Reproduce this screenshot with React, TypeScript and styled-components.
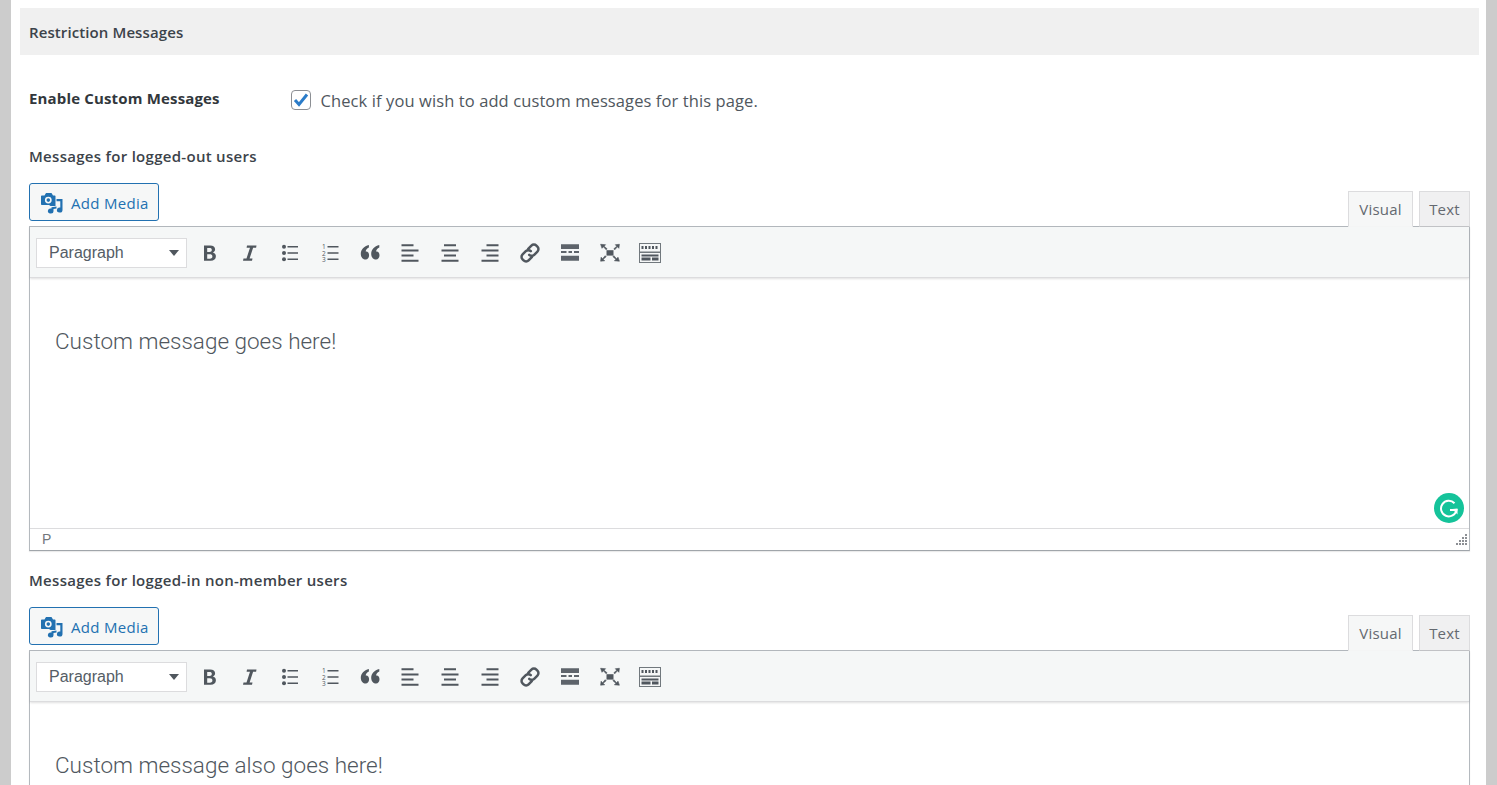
import React from "react";
import styled, { createGlobalStyle } from "styled-components";

const Global = createGlobalStyle`
  html, body { margin: 0; padding: 0; height: 100%; overflow: hidden; background: #ccc; }
  #root { height: 785px; overflow: hidden; }
`;

const Page = styled.div`
  box-sizing: border-box;
  height: 785px;
  margin: 0 11px;
  padding: 8px 7px 0 9px;
  background: #fff;
  overflow: hidden;
  font-family: "Open Sans", "Noto Sans", sans-serif;
  color: #3c434a;
`;

const SectionHeader = styled.h2`
  box-sizing: border-box;
  height: 47px;
  margin: 0;
  padding: 0 9px;
  background: #f0f0f0;
  font-size: 15px;
  font-weight: 600;
  letter-spacing: 0.1px;
  line-height: 49px;
  color: #3c434a;
`;

const Body = styled.div`
  padding: 0 9px;
`;

const OptionRow = styled.div`
  display: flex;
  align-items: flex-start;
  height: 92px;
  padding-top: 34px;
  box-sizing: border-box;
`;

const OptionLabel = styled.div`
  width: 262px;
  font-size: 15px;
  font-weight: 700;
  letter-spacing: 0.16px;
  line-height: 19px;
  color: #32373c;
`;

const CheckBox = styled.span`
  box-sizing: border-box;
  width: 20px;
  height: 20px;
  margin: 1px 9.5px 0 0;
  border: 1px solid #8c8f94;
  border-radius: 4px;
  background: #fff;
  display: flex;
  align-items: center;
  justify-content: center;
`;

const CheckText = styled.span`
  margin-top: 1px;
  font-size: 16.5px;
  letter-spacing: 0.1px;
  line-height: 22px;
  color: #50575e;
`;

const EditorLabel = styled.div`
  font-size: 15px;
  font-weight: 600;
  letter-spacing: 0.29px;
  line-height: 18px;
  color: #3c434a;
`;

const EditorHead = styled.div`
  display: flex;
  justify-content: space-between;
  align-items: flex-end;
  height: 43px;
  margin-top: 18px;
`;

const MediaButton = styled.button`
  box-sizing: border-box;
  width: 130px;
  height: 38px;
  margin-bottom: 5px;
  padding: 2px 0 0 10px;
  display: flex;
  align-items: center;
  gap: 7px;
  border: 1px solid #2271b1;
  border-radius: 3px;
  background: #f6f7f7;
  color: #2271b1;
  font: 400 15px/1 "Open Sans", sans-serif;
  letter-spacing: 0.3px;
`;

const Tabs = styled.div`
  display: flex;
  gap: 6px;
  align-items: flex-end;
  position: relative;
  top: 1px;
`;

const Tab = styled.div<{ $active?: boolean; $width: number }>`
  box-sizing: border-box;
  width: ${(p) => p.$width}px;
  height: 36px;
  text-align: center;
  border: 1px solid #dcdcde;
  border-bottom-color: ${(p) => (p.$active ? "#f6f7f7" : "#c3c4c7")};
  background: ${(p) => (p.$active ? "#f6f7f7" : "#f0f0f1")};
  font-size: 15px;
  letter-spacing: 0.2px;
  line-height: 34px;
  color: #646970;
`;

const Editor = styled.div`
  box-sizing: border-box;
  border: 1px solid #b4b9be;
  border-bottom-color: #a0a5aa;
  box-shadow: 0 1px 1px rgba(0, 0, 0, 0.08);
  background: #fff;
  margin-bottom: 20px;
`;

const Toolbar = styled.div`
  box-sizing: border-box;
  height: 51px;
  padding: 1px 0 0 6px;
  display: flex;
  align-items: center;
  background: #f5f7f7;
  border-bottom: 1px solid #dcdcde;
  box-shadow: 0 1px 2px rgba(0, 0, 0, 0.12);
  position: relative;
`;

const FormatSelect = styled.div`
  box-sizing: border-box;
  width: 151px;
  height: 30px;
  margin-right: 3px;
  padding: 0 7px 0 12px;
  display: flex;
  align-items: center;
  justify-content: space-between;
  background: #fff;
  border: 1px solid #dcdcde;
  font: 400 16px/1 "Liberation Sans", Arial, sans-serif;
  color: #555d66;
`;

const Caret = styled.span`
  width: 0;
  height: 0;
  border-left: 5px solid transparent;
  border-right: 5px solid transparent;
  border-top: 6px solid #50575e;
`;

const ToolButton = styled.span`
  width: 40px;
  height: 30px;
  display: flex;
  align-items: center;
  justify-content: center;
  color: #50575e;
`;

const Content = styled.div`
  box-sizing: border-box;
  height: 250px;
  padding: 48px 25px 0;
  position: relative;
  font: 300 22.5px/30px Roboto, sans-serif;
  color: #50575e;
`;

const Grammarly = styled.span`
  position: absolute;
  right: 5px;
  bottom: 5px;
  width: 30px;
  height: 30px;
`;

const StatusBar = styled.div`
  box-sizing: border-box;
  height: 22px;
  padding: 0 0 1px 12px;
  border-top: 1px solid #dcdcde;
  display: flex;
  align-items: center;
  justify-content: space-between;
  font: 400 14px/1 "Liberation Sans", Arial, sans-serif;
  color: #72777c;
`;

const Svg = ({ children }: { children: React.ReactNode }) => (
  <svg width="20" height="20" viewBox="0 0 20 20" fill="currentColor">{children}</svg>
);

const Bold = () => (
  <Svg>
    <path fillRule="evenodd" d="M4 2.500h6.200c3.100 0 4.900 1.300 4.900 3.800 0 1.600-.9 2.900-2.300 3.300 1.900.3 3.100 1.700 3.100 3.600 0 2.800-2 4.500-5.200 4.500H4zM7.200 5v3.900h2.300c1.500 0 2.300-.7 2.300-2S11 5 9.500 5zM7.200 11.300v4.400h2.700c1.600 0 2.500-.8 2.500-2.200s-.9-2.200-2.500-2.200z" />
  </Svg>
);
const Italic = () => (
  <Svg>
    <path d="M7 2.500h9.500l-.4 2.200h-3L9.600 15.500h2.900l-.5 2.300H3l.5-2.300h3L10 4.700H6.600z" />
  </Svg>
);
const BulletList = () => (
  <Svg>
    <circle cx="4" cy="3.800" r="2" /><circle cx="4" cy="10" r="2" /><circle cx="4" cy="16.300" r="2" />
    <path d="M7.500 3h10.500v1.500H7.500zM7.500 9.300h10.500v1.500H7.500zM7.500 15.500h10.500v1.500H7.500z" />
  </Svg>
);
const NumList = () => (
  <Svg>
    <text x="2" y="6" fontSize="6.500" fontFamily="Open Sans, sans-serif">1</text>
    <text x="2" y="12.500" fontSize="6.500" fontFamily="Open Sans, sans-serif">2</text>
    <text x="2" y="19" fontSize="6.500" fontFamily="Open Sans, sans-serif">3</text>
    <path d="M7.500 3h11v1.500h-11zM7.500 9.300h11v1.500h-11zM7.500 15.500h11v1.500h-11z" />
  </Svg>
);
const Quote = () => (
  <Svg>
    <g transform="translate(0,-2.500) scale(1,1.250)">
      <path d="M8.900 3.500v2.100c-2 .8-3 1.800-3.200 3.200 1.900-.3 3.400 1 3.400 3 0 2.100-1.500 3.400-3.400 3.400C3.200 15.200.8 13.700.8 10.600c0-3.600 3.200-6 8.100-7.100zM19.300 3.500v2.100c-2 .8-3 1.800-3.200 3.200 1.900-.3 3.400 1 3.400 3 0 2.100-1.500 3.400-3.400 3.400-2.500 0-4.900-1.500-4.900-4.600 0-3.600 3.200-6 8.100-7.100z" />
    </g>
  </Svg>
);
const Align = ({ kind }: { kind: "l" | "c" | "r" }) => {
  const short = kind === "l" ? 1.500 : kind === "c" ? 4 : 6.500;
  return (
    <Svg>
      <path d={`M${short} 1.200h12v2h-12zM1.500 6.400h17v2h-17zM${short} 11.600h12v2h-12zM1.500 16.800h17v2h-17z`} />
    </Svg>
  );
};
const LinkIcon = () => (
  <svg width="22" height="22" viewBox="0 0 22 22" fill="none" stroke="currentColor" strokeWidth="2.500" strokeLinecap="round">
    <path d="M9.200 6.800l3.200-3.200a3.500 3.500 0 0 1 5 0l1 1a3.500 3.500 0 0 1 0 5l-3.200 3.200a3.500 3.500 0 0 1-5 0" />
    <path d="M12.800 15.200l-3.200 3.200a3.500 3.500 0 0 1-5 0l-1-1a3.500 3.500 0 0 1 0-5l3.200-3.200a3.500 3.500 0 0 1 5 0" />
  </svg>
);
const Rule = () => (
  <Svg>
    <path d="M1 1.200h18v4.800H1zM1 7.900h5.500v2H1zM8.500 7.900h3.500v2H8.500zM14 7.900h5v2h-5zM1 12.800h18v5H1z" opacity=".92" />
  </Svg>
);
const Fullscreen = () => (
  <Svg>
    <path d="M6.500 7.200h7v5.400h-7z" />
    <path stroke="currentColor" strokeWidth=".6" d="M.6 1.300l5 .4-1.500 1.500 3 2.600-1 1-2.600-3L2 5.300zM19.400 1.300l-.5 4-1.500-1.500-2.600 3-1-1 3-2.600-1.500-1.500zM.6 18.200l.5-4 1.500 1.500 2.600-3 1 1-3 2.600 1.500 1.500zM19.400 18.200l-5-.4 1.500-1.500-3-2.600 1-1 2.600 3 1.500-1.500z" />
  </Svg>
);
const Kitchen = () => (
  <svg width="24" height="20" viewBox="0 0 24 20" fill="currentColor">
    <path fillRule="evenodd" d="M1 0h22v20H1zM2 1v7.500h20V1zM2 10v9h20v-9z" opacity=".8" />
    <path d="M3.500 3h2v3h-2zM7 3h2v3H7zM10.500 3h2v3h-2zM14 3h2v3h-2zM17.500 3h2v3h-2zM3.500 11.500h17v2h-17zM3.500 14.500h9v3h-9zM14 14.500h6.500v3H14z" />
  </svg>
);

const MediaIcon = () => (
  <svg width="24" height="24" viewBox="0 0 24 24" fill="#2271b1">
    <path fillRule="evenodd" d="M1.800 4.500H4.500L6 2h5.500L13 4.500h1.700c.5 0 .8.300.8.800V15h-5l-1.500-1H1.800c-.5 0-.8-.3-.8-.8V5.300c0-.5.300-.8.800-.8zM8.300 5.700a3.400 3.400 0 1 0 0 6.800 3.400 3.400 0 0 0 0-6.800z" />
    <circle cx="8.300" cy="9.100" r="1.800" />
    <path d="M16.500 8h6v11a2.800 2.500 0 1 1-2.200-2.400v-6.300h-3.800zM11.500 16.200l5-.8v2.200l-3 .5V20a2.800 2.500 0 1 1-2-2.400z" />
  </svg>
);

const CheckMark = () => (
  <svg width="16" height="14" viewBox="0 0 16 14" fill="none" stroke="#2b7cc9" strokeWidth="3">
    <path d="M2 7l4 4.500 8-10" />
  </svg>
);

const GrammarlyIcon = () => (
  <svg width="30" height="30" viewBox="0 0 30 30">
    <circle cx="15" cy="15" r="15" fill="#15c39a" />
    <path d="M20.500 10.200A7.800 7.800 0 1 0 22.500 17H16" fill="none" stroke="#fff" strokeWidth="2" />
    <path d="M23.500 15.500v6l-5-5.500z" fill="#fff" />
  </svg>
);

const Grip = () => (
  <svg width="14" height="14" viewBox="0 0 14 14" fill="#8c8f94">
    {[[10, 2], [10, 5], [7, 5], [10, 8], [7, 8], [4, 8], [10, 11], [7, 11], [4, 11], [1, 11]].map(([x, y]) => (
      <rect key={`${x}-${y}`} x={x} y={y} width="2" height="2" />
    ))}
  </svg>
);

const tools = [
  <Bold />, <Italic />, <BulletList />, <NumList />, <Quote />,
  <Align kind="l" />, <Align kind="c" />, <Align kind="r" />,
  <LinkIcon />, <Rule />, <Fullscreen />, <Kitchen />,
];

const EditorBlock = ({ label, text, first }: { label: string; text: string; first?: boolean }) => (
  <>
    <EditorLabel>{label}</EditorLabel>
    <EditorHead>
      <MediaButton><MediaIcon />Add Media</MediaButton>
      <Tabs>
        <Tab $active $width={65}>Visual</Tab>
        <Tab $width={51}>Text</Tab>
      </Tabs>
    </EditorHead>
    <Editor>
      <Toolbar>
        <FormatSelect>Paragraph<Caret /></FormatSelect>
        {tools.map((t, i) => <ToolButton key={i}>{t}</ToolButton>)}
      </Toolbar>
      <Content>
        {text}
        {first && <Grammarly><GrammarlyIcon /></Grammarly>}
      </Content>
      {first && <StatusBar>P<Grip /></StatusBar>}
    </Editor>
  </>
);

export default function App() {
  return (
    <>
      <Global />
      <Page>
        <SectionHeader>Restriction Messages</SectionHeader>
        <Body>
          <OptionRow>
            <OptionLabel>Enable Custom Messages</OptionLabel>
            <CheckBox><CheckMark /></CheckBox>
            <CheckText>Check if you wish to add custom messages for this page.</CheckText>
          </OptionRow>
          <EditorBlock label="Messages for logged-out users" text="Custom message goes here!" first />
          <EditorBlock label="Messages for logged-in non-member users" text="Custom message also goes here!" />
        </Body>
      </Page>
    </>
  );
}
